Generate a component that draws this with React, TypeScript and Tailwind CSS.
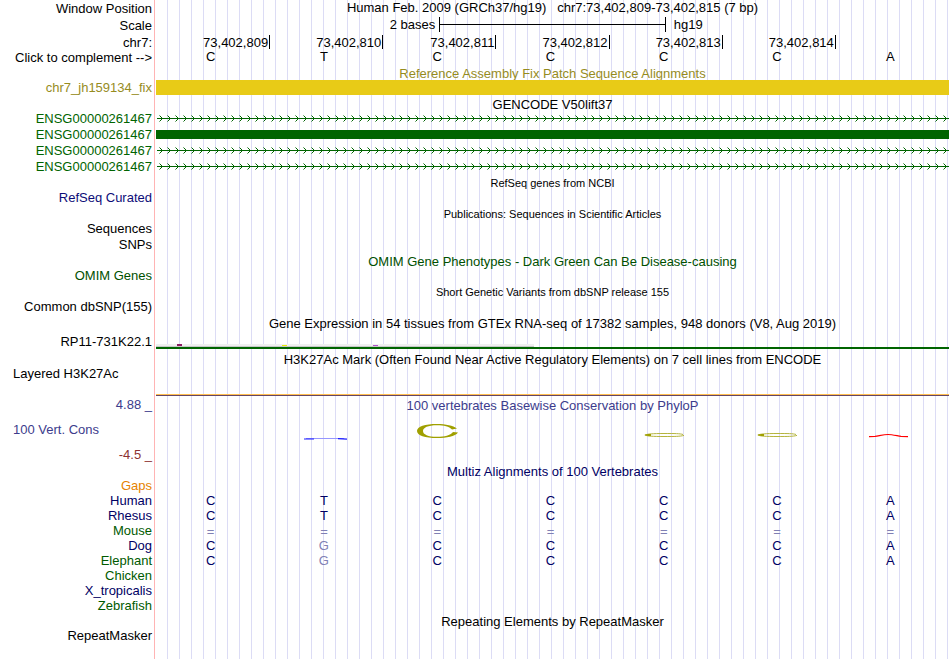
import React from 'react';

const positions = ['73,402,809', '73,402,810', '73,402,811', '73,402,812', '73,402,813', '73,402,814', ''];

const geneRows = ['arrows', 'bar', 'arrows', 'arrows'];

const species = [
  { name: 'Gaps', color: 'text-[#e68200]', bases: '' },
  { name: 'Human', color: 'text-[#000064]', bases: 'CTCCCCA' },
  { name: 'Rhesus', color: 'text-[#000064]', bases: 'CTCCCCA' },
  { name: 'Mouse', color: 'text-[#005a00]', bases: '=======' },
  { name: 'Dog', color: 'text-[#000064]', bases: 'CGCCCCA' },
  { name: 'Elephant', color: 'text-[#005a00]', bases: 'CGCCCCA' },
  { name: 'Chicken', color: 'text-[#005a00]', bases: '' },
  { name: 'X_tropicalis', color: 'text-[#000064]', bases: '' },
  { name: 'Zebrafish', color: 'text-[#005a00]', bases: '' },
];

type RowProps = {
  label?: React.ReactNode;
  labelClass?: string;
  className?: string;
  children?: React.ReactNode;
};

const Row = ({ label, labelClass = '', className = 'h-4', children }: RowProps) => (
  <div className={`flex ${className}`}>
    <div className={`w-[154px] shrink-0 pr-0.5 text-right ${labelClass}`}>{label}</div>
    <div className="ml-0.5 mr-px min-w-0 flex-1">{children}</div>
  </div>
);

const Title = ({ text, className = 'text-black' }: { text: string; className?: string }) => (
  <Row className="h-[15px]">
    <h2 className={`text-center leading-[17px] ${className}`}>{text}</h2>
  </Row>
);

const SmallTitle = ({ text }: { text: string }) => (
  <Row className="h-[15px]">
    <h2 className="text-center text-[11px] leading-[17px]">{text}</h2>
  </Row>
);

const Bases = ({ bases, className = 'text-[#000064]' }: { bases: string; className?: string }) => (
  <div className={`-ml-0.5 mr-0.5 grid grid-cols-7 text-center ${className}`}>
    {bases.split('').map((base, index) => (
      <span key={index} className={base === '=' || base === 'G' ? 'text-[#8080b4]' : ''}>
        {base}
      </span>
    ))}
  </div>
);

const Arrows = ({ id }: { id: string }) => (
  <svg className="block h-4 w-full" shapeRendering="crispEdges" aria-hidden="true">
    <defs>
      <pattern id={id} width="8" height="16" patternUnits="userSpaceOnUse">
        <path d="M6 7h1v1h-1zM5 6h1v1h-1zM5 8h1v1h-1zM4 5h1v1h-1zM4 9h1v1h-1z" fill="#006400" />
        <path d="M3 4h1v1h-1zM3 10h1v1h-1z" fill="#006400" opacity="0.5" />
      </pattern>
    </defs>
    <rect width="100%" height="16" fill={`url(#${id})`} />
    <rect x="1" y="7" width="100%" height="1" fill="#006400" />
  </svg>
);

const Conservation = () => (
  <svg className="block h-[51px] w-full" viewBox="0 0 793 51" preserveAspectRatio="none" aria-hidden="true">
    <path d="M150 26.5H188" stroke="#9696ff" strokeWidth="1" />
    <path d="M148 27H158M182 26.7L191 27.2" stroke="#1e1eff" strokeWidth="1.2" />
    <path
      d="M301 16.5C297 13.5 290 12 281 12C269 12 261 14.5 261 19C261 23.5 269 26 281 26C291 26 299 24.5 302 20.5L297 20C294 23.5 289 24.8 281 24.8C272 24.8 267 22.5 267 19C267 15.5 272 13.2 281 13.2C288 13.2 293 14.5 296 17.5Z"
      fill="#a0a000"
    />
    {[488, 601].map((x) => (
      <g key={x} transform={`translate(${x} 21)`}>
        <path d="M39 1.5C36 .5 31 .5 20 .5C9 .5 3 1 1 2C3 3.2 9 3.5 20 3.5C31 3.5 36 3.5 40 2.4" fill="none" stroke="#b4b43c" />
        <path d="M0 2L4 1H7V3H4Z" fill="#a0a000" />
      </g>
    ))}
    <path d="M713 24.7L719 24.4C724 23.6 728 22.5 732 22.5C736 22.5 741 23.8 745 24.4L752 24.7" fill="none" stroke="#ff0000" strokeWidth="1.2" />
  </svg>
);

const App = () => {
  return (
    <main className="relative min-h-screen overflow-hidden bg-white font-['Liberation_Sans',Arial,sans-serif] text-[13px] leading-[15px] text-black">
      <div className="absolute inset-y-0 left-[156px] right-0 bg-[repeating-linear-gradient(to_right,transparent_0px,transparent_11px,#dcdcf5_11px,#dcdcf5_12px)]" />
      <div className="absolute inset-y-0 left-[154px] w-px bg-[#ffb4b4]" />

      <div className="relative">
        <Row label="Window Position" labelClass="pt-px" className="h-[17px]">
          <h1 className="whitespace-pre text-center">
            {'Human Feb. 2009 (GRCh37/hg19)   chr7:73,402,809-73,402,815 (7 bp)'}
          </h1>
        </Row>
        <Row label="Scale" labelClass="pt-px" className="h-[17px]">
          <div className="grid grid-cols-[5fr_4fr_5fr]">
            <span className="pr-1 text-right">2 bases</span>
            <span className="flex h-[15px] items-center border-x border-black">
              <span className="h-px w-full bg-black" />
            </span>
            <span className="pl-2">hg19</span>
          </div>
        </Row>
        <Row label="chr7:" labelClass="pt-px">
          <div className="ml-px grid grid-cols-7 pt-px text-right">
            {positions.map((position, index) => (
              <span key={index} className={position ? 'h-[14px] border-r border-black pr-px' : ''}>
                {position}
              </span>
            ))}
          </div>
        </Row>
        <Row label="Click to complement -->" className="h-[15px]">
          <Bases bases="CTCCCCA" className="leading-[13px] text-black" />
        </Row>

        {/* the patch bar cuts off the descenders of its title */}
        <div className="overflow-hidden">
          <Title text="Reference Assembly Fix Patch Sequence Alignments" className="text-[#968c1e]" />
        </div>
        <Row label="chr7_jh159134_fix" labelClass="text-[#968c1e]" className="h-[15px]">
          <div className="h-[15px] bg-[#e8cb17]" />
        </Row>

        <Row>
          <h2 className="text-center leading-[19px]">GENCODE V50lift37</h2>
        </Row>
        {geneRows.map((kind, index) => (
          <Row key={index} label="ENSG00000261467" labelClass="text-[#006400]">
            {kind === 'bar' ? (
              <div className="pt-[3px]">
                <div className="h-[9px] bg-[#006400]" />
              </div>
            ) : (
              <Arrows id={`strand-${index}`} />
            )}
          </Row>
        ))}

        <SmallTitle text="RefSeq genes from NCBI" />
        <Row label="RefSeq Curated" labelClass="text-[#0c0c78]" />
        <SmallTitle text="Publications: Sequences in Scientific Articles" />
        <Row label="Sequences" />
        <Row label="SNPs" />
        <Title text="OMIM Gene Phenotypes - Dark Green Can Be Disease-causing" className="text-[#005000]" />
        <Row label="OMIM Genes" labelClass="text-[#005000]" />
        <SmallTitle text="Short Genetic Variants from dbSNP release 155" />
        <Row label="Common dbSNP(155)" />

        <Title text="Gene Expression in 54 tissues from GTEx RNA-seq of 17382 samples, 948 donors (V8, Aug 2019)" />
        <Row label="RP11-731K22.1" labelClass="pt-1" className="h-[21px]">
          <svg className="block h-[21px] w-full" shapeRendering="crispEdges" aria-hidden="true">
            <rect y="14" width="378" height="2" fill="#f0f0f0" />
            <rect y="16" width="378" height="1" fill="#c8c8c8" />
            <rect x="21" y="14" width="5" height="2" fill="#8b1c62" />
            <rect x="126" y="15" width="5" height="1" fill="#eeee00" />
            <rect x="217" y="15" width="5" height="1" fill="#b452cd" />
            <rect y="17" width="100%" height="2" fill="#006400" />
          </svg>
        </Row>

        <Title text="H3K27Ac Mark (Often Found Near Active Regulatory Elements) on 7 cell lines from ENCODE" />
        <Row
          label={<div className="pl-[13px] text-left">Layered H3K27Ac</div>}
          className="h-[31px]"
        >
          <div className="pt-7">
            <div className="h-px bg-[#ffbe50]" />
            <div className="h-px bg-[#644664]" />
          </div>
        </Row>

        <Row label="4.88 _" labelClass="text-[#3c3c8c]" className="h-[15px]">
          <h2 className="text-center leading-[17px] text-[#3c3c8c]">100 vertebrates Basewise Conservation by PhyloP</h2>
        </Row>
        <Row
          label={
            <div className="flex flex-col gap-2.5 pt-2.5">
              <span className="pl-[13px] text-left text-[#3c3c8c]">100 Vert. Cons</span>
              <span className="text-[#8c3232]">-4.5 _</span>
            </div>
          }
          className="h-[51px]"
        >
          <Conservation />
        </Row>

        <Title text="Multiz Alignments of 100 Vertebrates" className="text-[#000064]" />
        {species.map((item) => (
          <Row key={item.name} label={item.name} labelClass={item.color} className="h-[15px]">
            <Bases
              bases={item.bases}
              className={item.name === 'Mouse' ? 'leading-[17px] text-[#000064]' : 'text-[#000064]'}
            />
          </Row>
        ))}

        <Title text="Repeating Elements by RepeatMasker" />
        <Row label="RepeatMasker" className="h-[31px]" />
      </div>
    </main>
  );
};

export default App;
